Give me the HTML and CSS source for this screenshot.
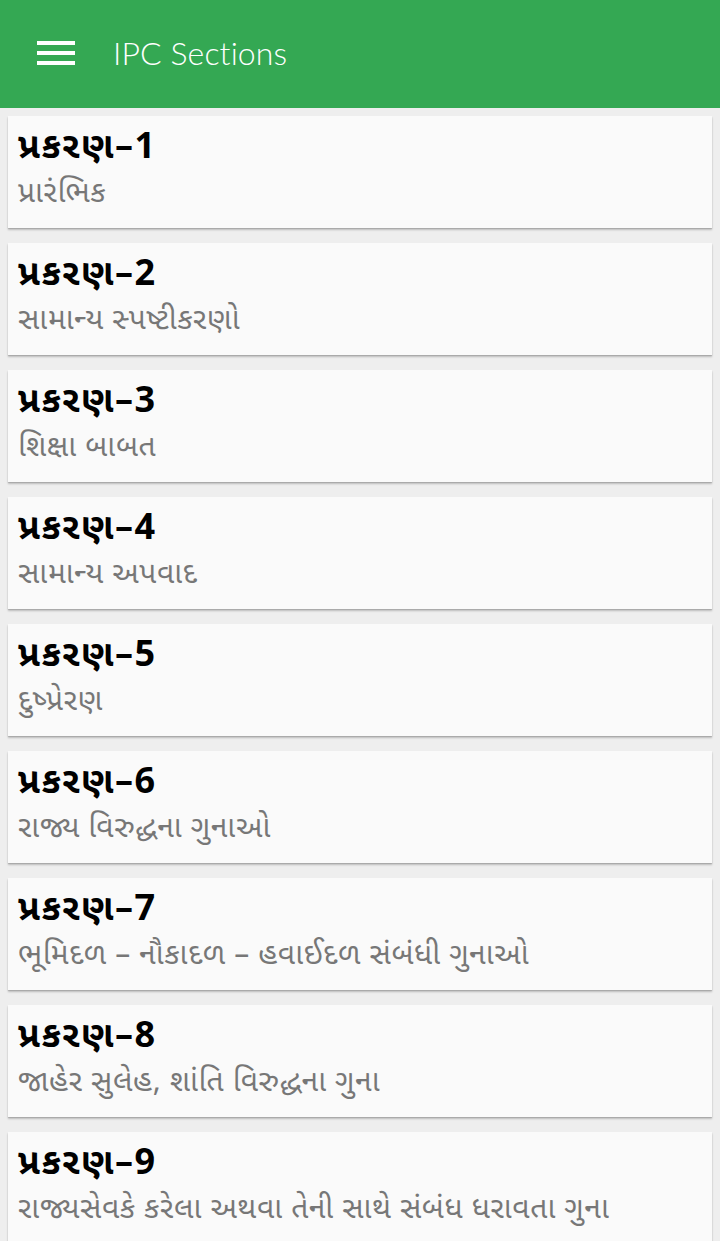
FILE: index.html
```html
<!DOCTYPE html>
<html lang="gu">
<head>
    <meta charset="UTF-8">
    <meta name="viewport" content="width=device-width, initial-scale=1.0">
    <title>IPC Sections</title>
    <link rel="stylesheet" href="styles.css">
</head>
<body>
    <header class="app-bar">
        <button class="menu-btn" aria-label="Menu">
            <svg width="38" height="28" viewBox="0 0 38 28">
                <rect x="0" y="2" width="38" height="4" fill="#fff"/>
                <rect x="0" y="12" width="38" height="4" fill="#fff"/>
                <rect x="0" y="22" width="38" height="4" fill="#fff"/>
            </svg>
        </button>
        <h1 class="title">IPC Sections</h1>
    </header>

    <main class="list">
        <div class="card">
            <div class="card-title">પ્રકરણ–1</div>
            <div class="card-sub">પ્રારંભિક</div>
        </div>
        <div class="card">
            <div class="card-title">પ્રકરણ–2</div>
            <div class="card-sub">સામાન્ય સ્પષ્ટીકરણો</div>
        </div>
        <div class="card">
            <div class="card-title">પ્રકરણ–3</div>
            <div class="card-sub">શિક્ષા બાબત</div>
        </div>
        <div class="card">
            <div class="card-title">પ્રકરણ–4</div>
            <div class="card-sub">સામાન્ય અપવાદ</div>
        </div>
        <div class="card">
            <div class="card-title">પ્રકરણ–5</div>
            <div class="card-sub">દુષ્પ્રેરણ</div>
        </div>
        <div class="card">
            <div class="card-title">પ્રકરણ–6</div>
            <div class="card-sub">રાજ્ય વિરુદ્ધના ગુનાઓ</div>
        </div>
        <div class="card">
            <div class="card-title">પ્રકરણ–7</div>
            <div class="card-sub">ભૂમિદળ – નૌકાદળ – હવાઈદળ સંબંધી ગુનાઓ</div>
        </div>
        <div class="card">
            <div class="card-title">પ્રકરણ–8</div>
            <div class="card-sub">જાહેર સુલેહ, શાંતિ વિરુદ્ધના ગુના</div>
        </div>
        <div class="card">
            <div class="card-title">પ્રકરણ–9</div>
            <div class="card-sub">રાજ્યસેવકે કરેલા અથવા તેની સાથે સંબંધ ધરાવતા ગુના</div>
        </div>
    </main>
</body>
</html>
```

FILE: styles.css
```css
body {
    margin: 0;
    background-color: #eeeeee;
    font-family: 'Noto Sans Gujarati', 'Noto Sans', sans-serif;
}

.app-bar {
    height: 108px;
    background-color: #34a853;
    display: flex;
    align-items: center;
    padding-left: 37px;
}

.menu-btn {
    background: none;
    border: none;
    padding: 0;
    margin: 0;
    display: flex;
    margin-top: -2px;
}

.title {
    margin: -3px 0 0 38px;
    color: #fff;
    font-family: Lato, sans-serif;
    font-weight: 300;
    font-size: 32px;
    letter-spacing: 0.1px;
}

.list {
    display: flex;
    flex-direction: column;
    gap: 15px;
    padding: 8px 8px 0 8px;
}

.card {
    background-color: #fafafa;
    height: 112px;
    box-sizing: border-box;
    padding: 11px 10px 0 10px;
    box-shadow: 0 1px 1px rgba(0, 0, 0, 0.12), 0 2px 2px rgba(0, 0, 0, 0.2);
}

.card-title {
    font-size: 36px;
    font-weight: bold;
    color: #000;
    line-height: 46px;
    letter-spacing: 1.5px;
}

.card-sub {
    font-size: 30px;
    color: #777777;
    line-height: 44px;
    letter-spacing: 0.6px;
}
```
